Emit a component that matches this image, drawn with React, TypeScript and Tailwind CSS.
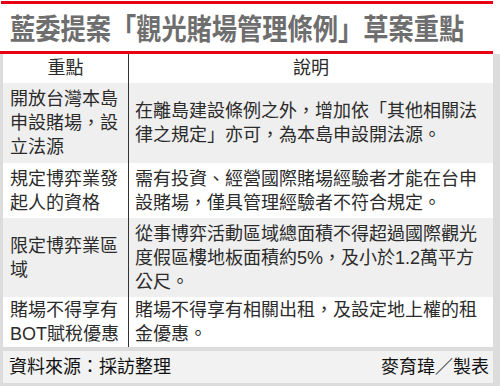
const rows = [
  {
    left: ['開放台灣本島', '申設賭場，設', '立法源'],
    right: ['在離島建設條例之外，增加依「其他相關法', '律之規定」亦可，為本島申設開法源。'],
    h: 'h-[80px]',
    bg: 'bg-[#efefef]',
  },
  {
    left: ['規定博弈業發', '起人的資格'],
    right: ['需有投資、經營國際賭場經驗者才能在台申', '設賭場，僅具管理經驗者不符合規定。'],
    h: 'h-[55px]',
    bg: 'bg-white',
  },
  {
    left: ['限定博弈業區', '域'],
    right: ['從事博弈活動區域總面積不得超過國際觀光', '度假區樓地板面積約5%，及小於1.2萬平方', '公尺。'],
    h: 'h-[79px]',
    bg: 'bg-[#efefef]',
  },
  {
    left: ['賭場不得享有', 'BOT賦稅優惠'],
    right: ['賭場不得享有相關出租，及設定地上權的租', '金優惠。'],
    h: 'h-[50px]',
    bg: 'bg-white',
  },
]

function Lines({ items }: { items: string[] }) {
  return (
    <div className="flex flex-col">
      {items.map((t) => (
        <div key={t} className="leading-[24px] whitespace-nowrap">{t}</div>
      ))}
    </div>
  )
}

export default function App() {
  return (
    <div className="w-[500px] h-[386px] bg-white overflow-hidden text-[#2b2b2b] font-['Liberation_Sans','Noto_Sans_CJK_TC',sans-serif] text-[18px]">
      <div className="mt-[1px] ml-[1px] w-[492px] h-[3px] bg-[#e60012]" />
      <div className="h-[47px] pl-[10px] flex items-center">
        <span className="inline-block origin-left scale-x-[0.87] text-[29px] leading-none font-bold text-[#6e6e6e] whitespace-nowrap font-['Noto_Sans_CJK_TC',sans-serif]">
          藍委提案「觀光賭場管理條例」草案重點
        </span>
      </div>
      <div className="w-[493px] h-[3px] bg-[#e60012]" />
      <div className="border-l-[3px] border-r-[7px] border-[#dcdcdc]">
        <div className="grid grid-cols-[125px_1px_1fr] h-[29px] bg-white">
          <div className="flex items-center justify-center">重點</div>
          <div className="bg-[#333]" />
          <div className="flex items-center justify-center">說明</div>
        </div>
        {rows.map((r, i) => (
          <div key={i} className={`grid grid-cols-[125px_1px_1fr] ${r.h} ${r.bg}`}>
            <div className="flex items-center pl-[7px]">
              <Lines items={r.left} />
            </div>
            <div className="bg-[#333]" />
            <div className="flex items-center pl-[6px]">
              <Lines items={r.right} />
            </div>
          </div>
        ))}
      </div>
      <div className="border-[#dcdcdc] border-l-[3px] border-r-[7px] border-t-[4px] border-b-[3px] h-[39px] bg-[#f2f2f2] flex items-center justify-between pl-[6px] pr-[4px] text-[#111]">
        <span>資料來源：採訪整理</span>
        <span>麥育瑋／製表</span>
      </div>
    </div>
  )
}
